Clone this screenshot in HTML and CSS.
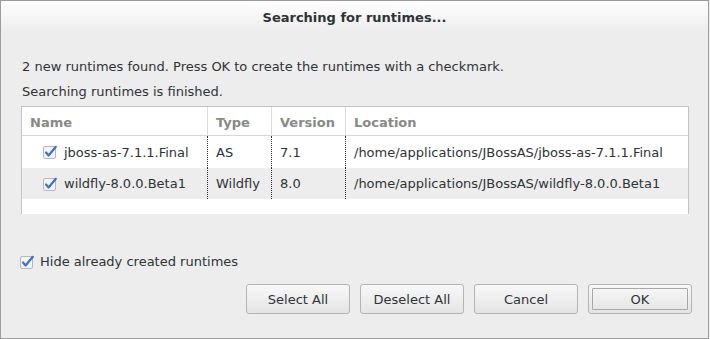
FILE: index.html
```html
<!DOCTYPE html>
<html>
<head>
<meta charset="utf-8">
<link rel="stylesheet" href="styles.css">
</head>
<body>
<div class="window">
  <div class="titlebar">Searching for runtimes...</div>
  <div class="content">
    <div class="msg first">2 new runtimes found. Press OK to create the runtimes with a checkmark.</div>
    <div class="msg second">Searching runtimes is finished.</div>
    <div class="table">
      <div class="row head">
        <div class="cell c1">Name</div>
        <div class="cell c2">Type</div>
        <div class="cell c3">Version</div>
        <div class="cell c4">Location</div>
      </div>
      <div class="row">
        <div class="cell c1 namecell"><svg class="cb" viewBox="0 0 14 14"><rect x="0.5" y="1.5" width="12" height="12" rx="1.5" fill="#f4f4f4" stroke="#b8b8b8"/><path d="M3 7.5 L5.6 10.5 L12.8 1.8" fill="none" stroke="#3d72c8" stroke-width="2.2" stroke-linecap="round" stroke-linejoin="round"/></svg>jboss-as-7.1.1.Final</div>
        <div class="cell c2">AS</div>
        <div class="cell c3">7.1</div>
        <div class="cell c4">/home/applications/JBossAS/jboss-as-7.1.1.Final</div>
      </div>
      <div class="row alt">
        <div class="cell c1 namecell"><svg class="cb" viewBox="0 0 14 14"><rect x="0.5" y="1.5" width="12" height="12" rx="1.5" fill="#f4f4f4" stroke="#b8b8b8"/><path d="M3 7.5 L5.6 10.5 L12.8 1.8" fill="none" stroke="#3d72c8" stroke-width="2.2" stroke-linecap="round" stroke-linejoin="round"/></svg>wildfly-8.0.0.Beta1</div>
        <div class="cell c2">Wildfly</div>
        <div class="cell c3">8.0</div>
        <div class="cell c4">/home/applications/JBossAS/wildfly-8.0.0.Beta1</div>
      </div>
    </div>
    <div class="hide"><svg class="cb" viewBox="0 0 14 14"><rect x="0.5" y="1.5" width="12" height="12" rx="1.5" fill="#f4f4f4" stroke="#b8b8b8"/><path d="M3 7.5 L5.6 10.5 L12.8 1.8" fill="none" stroke="#3d72c8" stroke-width="2.2" stroke-linecap="round" stroke-linejoin="round"/></svg>Hide already created runtimes</div>
    <div class="buttons">
      <div class="btn">Select All</div>
      <div class="btn">Deselect All</div>
      <div class="btn">Cancel</div>
      <div class="btn default"><span class="focus">OK</span></div>
    </div>
  </div>
</div>
</body>
</html>
```
FILE: styles.css
```css
html, body {
  margin: 0;
  padding: 0;
  background: #ededed;
}
body {
  font-family: "DejaVu Sans", sans-serif;
  font-size: 13px;
  color: #2e3436;
}
.window {
  width: 709px;
  height: 339px;
  box-sizing: border-box;
  border: 1px solid #9c9c9c;
  background: #ededed;
  overflow: hidden;
}
.titlebar {
  height: 34px;
  line-height: 33px;
  text-align: center;
  font-weight: bold;
  background: linear-gradient(#ffffff, #ededed 30px);
}
.content {
  padding: 0 20px 0 20px;
}
.msg {
  height: 17px;
  line-height: 17px;
  padding-left: 1px;
}
.msg.first {
  margin-top: 23px;
}
.msg.second {
  margin-top: 8px;
}
.table {
  margin-top: 6px;
  width: 668px;
  height: 108px;
  box-sizing: border-box;
  border: 1px solid #c4c4c4;
  border-bottom: none;
  background: #ffffff;
}
.row {
  display: grid;
  grid-template-columns: 185px 64px 74px 1fr;
  height: 32px;
  align-items: stretch;
}
.row.alt {
  background: #ededed;
  height: 31px;
}
.row.head {
  height: 28px;
  border-bottom: 1px solid #d6d6d6;
  color: #888a85;
  font-weight: bold;
}
.cell {
  display: flex;
  align-items: center;
  padding-left: 8px;
  white-space: nowrap;
  overflow: hidden;
}
.row.head .cell + .cell {
  border-left: 1px solid #dcdcdc;
}
.row:not(.head) .cell + .cell {
  border-left: 1px dotted #2e3436;
}
.row.head .cell {
  padding-left: 8px;
  padding-top: 3px;
}
.namecell {
  padding-left: 21px;
}
.cb {
  width: 14px;
  height: 14px;
  margin-right: 7px;
  flex: none;
}
.hide {
  display: flex;
  align-items: center;
  height: 17px;
  margin-top: 39px;
  margin-left: -1px;
}
.hide .cb {
  margin-right: 6px;
}
.buttons {
  display: flex;
  justify-content: flex-end;
  gap: 10px;
  margin-top: 14px;
  margin-right: -4px;
}
.btn {
  width: 104px;
  height: 30px;
  box-sizing: border-box;
  border: 1px solid #b4b4b4;
  border-radius: 3px;
  background: linear-gradient(#f8f8f8, #e4e4e4);
  display: flex;
  align-items: center;
  justify-content: center;
  color: #2e3436;
}
.btn.default {
  padding: 3px;
}
.focus {
  flex: 1;
  align-self: stretch;
  display: flex;
  align-items: center;
  justify-content: center;
  border: 1px solid #a8a8a8;
  border-radius: 1px;
}
```
